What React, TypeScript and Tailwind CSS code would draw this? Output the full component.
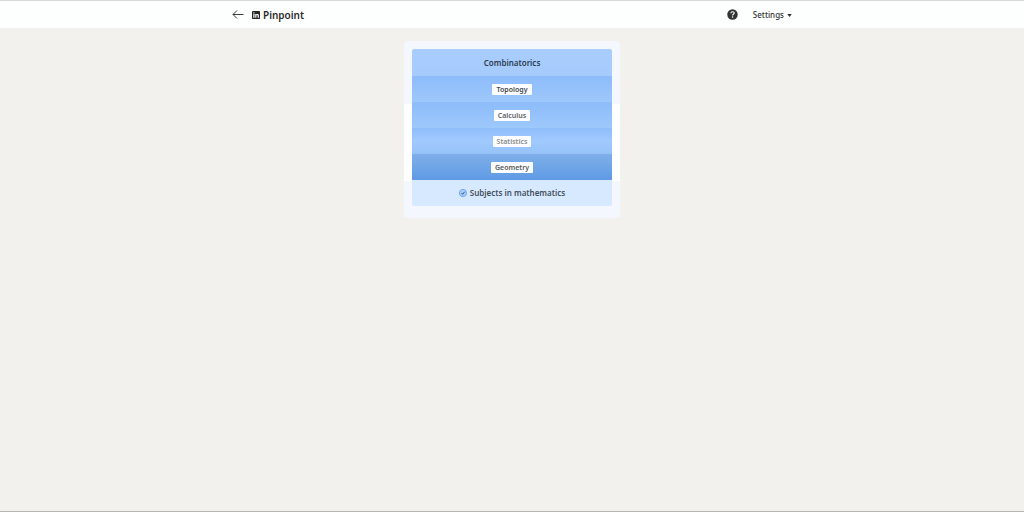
interface Clue {
  word: string;
  row: string;
  text: string;
}

const CLUES: Clue[] = [
  { word: 'Topology', row: 'bg-linear-to-b from-[#8dbcfa] to-[#9dc8fb]', text: 'text-[#45484c]' },
  { word: 'Calculus', row: 'bg-linear-to-b from-[#8dbcfa] to-[#9dc8fb]', text: 'text-[#606264]' },
  { word: 'Statistics', row: 'bg-linear-to-b from-[#8fbdfb] via-[#a1caff] to-[#95c2f7]', text: 'text-[#8c8c8c]' },
  { word: 'Geometry', row: 'bg-linear-to-b from-[#7fafe9] to-[#5f9ae4]', text: 'text-[#565859]' },
];

function BackIcon() {
  return (
    <svg viewBox="0 0 12 10" className="h-[10px] w-[12px]" fill="none" stroke="#3a3a3a" strokeWidth="1">
      <path d="M11.5 4.5H1M5 .5l-4 4 4 4" />
    </svg>
  );
}

function LinkedInLogo() {
  return (
    <svg viewBox="0 0 16 16" className="size-2">
      <rect width="16" height="16" rx="1.5" fill="#252525" />
      <circle cx="3.8" cy="3.8" r="1.4" fill="#fff" />
      <path
        d="M2.6 6.2H5v7.4H2.6zM6.5 6.2h2.3v1c.4-.7 1.2-1.2 2.2-1.2 2.1 0 2.7 1.4 2.7 3.4v4.2h-2.4V9.8c0-1-.2-1.8-1.2-1.8s-1.3.8-1.3 1.8v3.8H6.5z"
        fill="#fff"
      />
    </svg>
  );
}

function HelpIcon() {
  return (
    <svg viewBox="0 0 22 22" className="size-[11px]" fill="none">
      <circle cx="11" cy="11" r="10.5" fill="#333" />
      <path d="M7.7 8.5c0-2 1.4-3.1 3.4-3.1 2.1 0 3.4 1.1 3.4 2.8 0 2.3-3.3 2.4-3.3 4.6" stroke="#fff" strokeWidth="2.2" />
      <circle cx="11.1" cy="15.9" r="1.5" fill="#fff" />
    </svg>
  );
}

function SolvedIcon() {
  return (
    <svg viewBox="0 0 16 16" className="size-2" fill="none">
      <circle cx="8" cy="8" r="7.2" fill="#a9cffc" stroke="#5c9bea" strokeWidth="1.6" />
      <path d="M5 8.2l2.2 2.4 4-5" stroke="#31527d" strokeWidth="2" />
    </svg>
  );
}

export default function App() {
  return (
    <div className="flex min-h-screen flex-col border-b border-[#b5b5b3] bg-[#f3f1ed] font-['Noto_Sans','Open_Sans',sans-serif] font-semibold">
      <header className="border-t border-[#d8dad9] bg-[#fdfefe]">
        <div className="mx-auto flex h-[27px] w-full max-w-[560px] items-center justify-between">
          <div className="flex items-center gap-2">
            <button type="button" aria-label="Back">
              <BackIcon />
            </button>
            <h1 className="flex items-center gap-[3px] text-[10px] leading-[14px] text-[#2b2b2b]">
              <LinkedInLogo />
              Pinpoint
            </h1>
          </div>
          <div className="flex items-center gap-[15px]">
            <button type="button" aria-label="Help">
              <HelpIcon />
            </button>
            <button type="button" className="flex items-center gap-[3px] pt-px text-[8px] leading-[14px] font-medium text-[#333]">
              Settings
              <svg viewBox="0 0 6 4" className="h-[3px] w-[5px]" fill="#333">
                <path d="M0 0h6L3 4z" />
              </svg>
            </button>
          </div>
        </div>
      </header>

      <main className="mx-auto mt-[13px] w-full max-w-[216px] rounded-[4px] bg-[linear-gradient(#f4f8fe_63px,#fefefe_63px,#fefefe_140px,#f4f8fe_140px)] px-2 pt-2 pb-3">
        <div className="overflow-hidden rounded-[2px] text-center text-[8px] leading-[12px]">
          <h2 className="bg-linear-to-b from-[#a8cdfd] to-[#a5cbfc] pt-2 pb-[7px] text-[#2d3c50]">Combinatorics</h2>
          <ul>
            {CLUES.map((clue) => (
              <li key={clue.word} className={`flex h-[26px] items-center justify-center ${clue.row}`}>
                <span className={`rounded-[1px] bg-[#fbfdfe] px-1 text-[7px] leading-[11px] ${clue.text}`}>
                  {clue.word}
                </span>
              </li>
            ))}
          </ul>
          <p className="flex h-[26px] items-center justify-center gap-[3px] bg-[#d6e9fe] text-[#45505c]">
            <SolvedIcon />
            Subjects in mathematics
          </p>
        </div>
      </main>
    </div>
  );
}
